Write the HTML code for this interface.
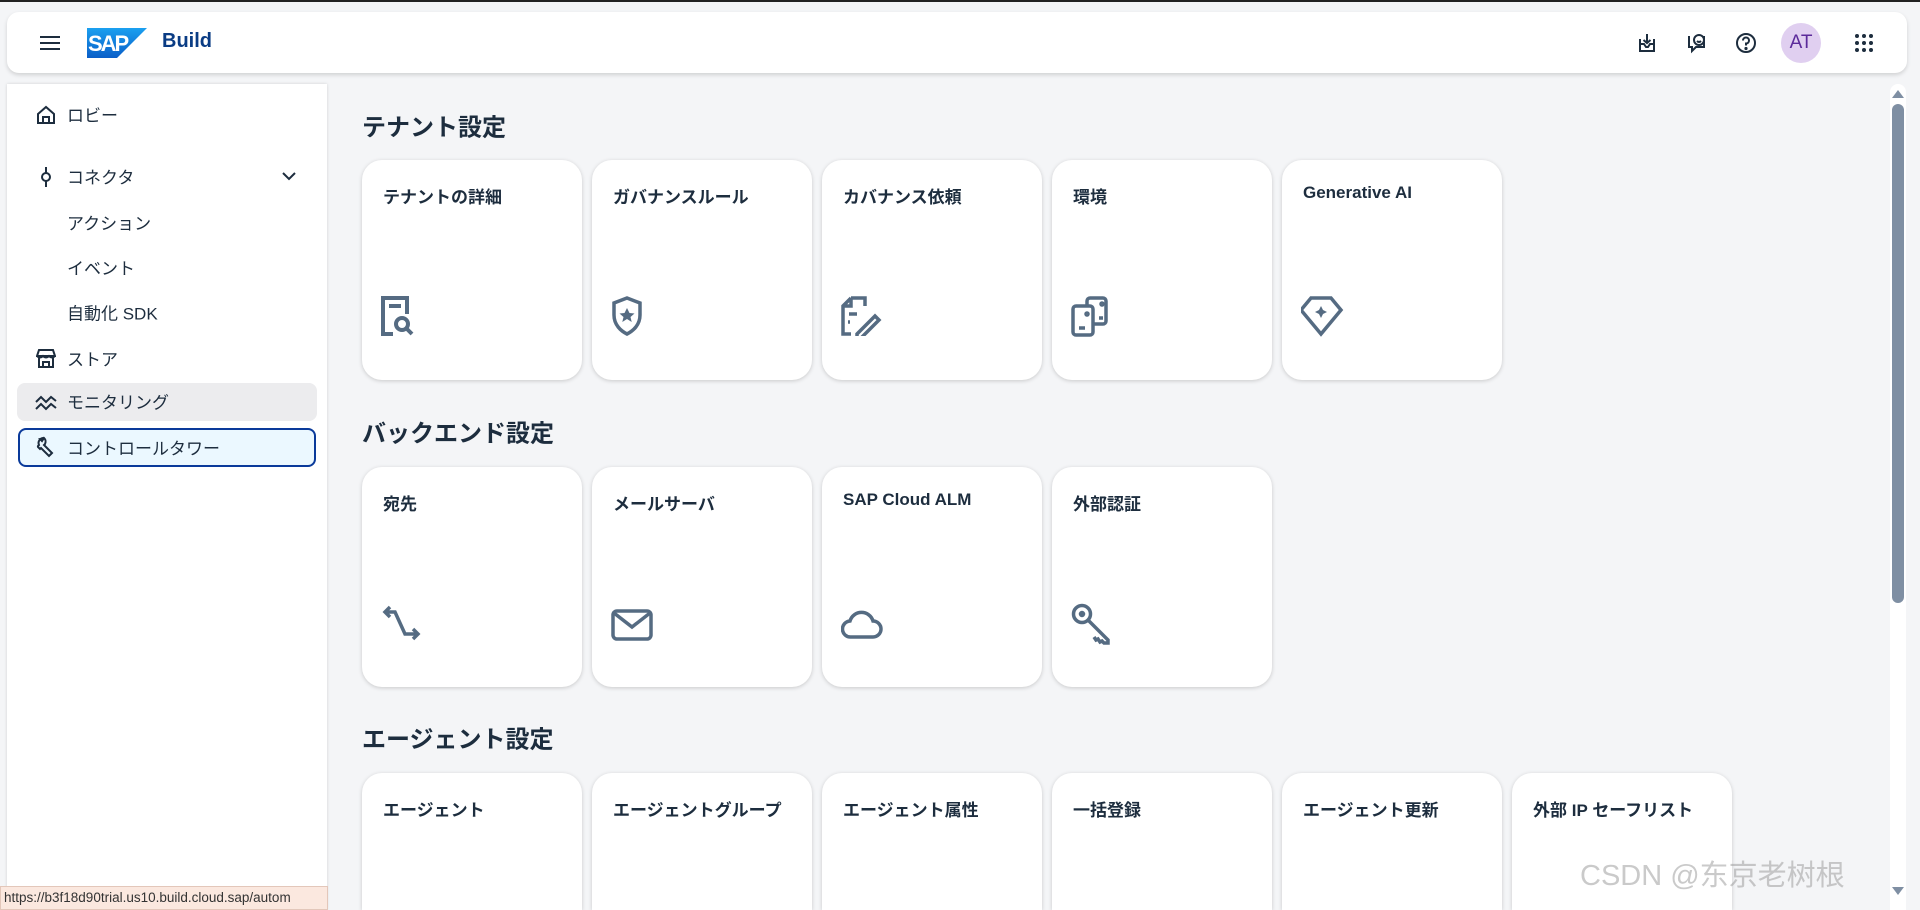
<!DOCTYPE html>
<html style="width:1920px;height:910px;overflow:hidden"><head><meta charset="utf-8"><style>
*{margin:0;padding:0;box-sizing:border-box}
html,body{width:1920px;height:910px;overflow:hidden}
body{background:#f4f5f7;font-family:"Liberation Sans","Noto Sans CJK JP",sans-serif;color:#1d2d3e;position:relative}
.topline{position:absolute;left:0;top:0;width:1920px;height:2px;background:#222}
.header{position:absolute;left:7px;top:12px;width:1900px;height:61px;background:#fff;border-radius:12px;box-shadow:0 2px 4px rgba(0,0,0,.15)}
.side{position:absolute;left:7px;top:84px;width:320px;height:826px;background:#fff;box-shadow:0 0 3px rgba(0,0,0,.15)}
.item{position:absolute;left:67px;font-size:17px;color:#1d2d3e;transform:translateY(-50%)}
.ic{position:absolute;transform:translate(-50%,-50%)}
.sec{position:absolute;left:362px;font-size:24px;font-weight:bold;transform:translateY(-50%)}
.card{position:absolute;width:220px;height:220px;background:#fff;border-radius:20px;box-shadow:0 1px 4px rgba(0,0,0,.18)}
.card.r3{height:137px;border-radius:20px 20px 0 0}
.card .t{position:absolute;left:21px;top:23px;font-size:17px;font-weight:bold;white-space:nowrap}
.card svg{position:absolute;left:19px;top:136px}
</style></head><body>
<div class="topline"></div>
<div class="header">
  <svg style="position:absolute;left:33px;top:23px" width="20" height="16"><g stroke="#1d2d3e" stroke-width="2"><line x1="0" y1="2" x2="20" y2="2"/><line x1="0" y1="8" x2="20" y2="8"/><line x1="0" y1="14" x2="20" y2="14"/></g></svg>
  <svg style="position:absolute;left:80px;top:16px" width="60" height="30"><defs><linearGradient id="g" x1="0" x2="0" y1="0" y2="1"><stop offset="0" stop-color="#1ba0f0"/><stop offset="1" stop-color="#0a5ec8"/></linearGradient></defs><polygon points="0,0 60,0 30,30 0,30" fill="url(#g)"/><text x="1" y="23" font-family="Liberation Sans" font-weight="bold" font-size="22" fill="#fff" letter-spacing="-2">SAP</text></svg>
  <div style="position:absolute;left:155px;top:18px;font-size:20px;color:#0a3c84;font-weight:bold">Build</div>
  <svg class="ic" style="left:1640px;top:31px" width="20" height="20" fill="none" stroke="#1d2d3e" stroke-width="2"><path d="M3 6v12h14V6M3 11h4l2 3h2l2-3h4M10 1v9M6.5 7l3.5 3 3.5-3"/></svg>
  <svg class="ic" style="left:1689px;top:31px" width="22" height="22" fill="none" stroke="#1d2d3e" stroke-width="2"><path d="M4 4v11h3v4l4-4h8V4"/><circle cx="14" cy="8" r="5"/><path d="M12 9q2 2 4 0"/></svg>
  <svg class="ic" style="left:1739px;top:31px" width="22" height="22" fill="none" stroke="#1d2d3e" stroke-width="2"><circle cx="11" cy="11" r="9"/><path d="M8 8.5a3 3 0 1 1 3 3v2"/><circle cx="11" cy="16.5" r=".6" fill="#1d2d3e"/></svg>
  <div style="position:absolute;left:1774px;top:11px;width:40px;height:40px;border-radius:50%;background:#e0cff0;color:#5b2a9a;font-size:19px;text-align:center;line-height:40px">AT</div>
  <svg class="ic" style="left:1857px;top:31px" width="20" height="20" fill="#1d2d3e"><circle cx="3" cy="3" r="2"/><circle cx="10" cy="3" r="2"/><circle cx="17" cy="3" r="2"/><circle cx="3" cy="10" r="2"/><circle cx="10" cy="10" r="2"/><circle cx="17" cy="10" r="2"/><circle cx="3" cy="17" r="2"/><circle cx="10" cy="17" r="2"/><circle cx="17" cy="17" r="2"/></svg>
</div>
<div class="side"></div>
<div style="position:absolute;left:17px;top:383px;width:300px;height:38px;background:#ececee;border-radius:8px"></div>
<div style="position:absolute;left:18px;top:428px;width:298px;height:39px;background:#ebf8ff;border:2px solid #0a3a9a;border-radius:8px"></div>
<svg class="ic" style="left:46px;top:115px" width="20" height="20" fill="none" stroke="#1d2d3e" stroke-width="2"><path d="M2 9l8-7 8 7v9H2zM7 18v-6h6v6"/></svg>
<div class="item" style="top:114px">ロビー</div>
<svg class="ic" style="left:46px;top:177px" width="12" height="20" fill="none" stroke="#1d2d3e" stroke-width="2"><circle cx="6" cy="10" r="4"/><path d="M6 0v6M6 14v6"/></svg>
<div class="item" style="top:176px">コネクタ</div>
<svg class="ic" style="left:289px;top:177px" width="14" height="10" fill="none" stroke="#1d2d3e" stroke-width="2"><path d="M1 1l6 6 6-6"/></svg>
<div class="item" style="top:222px">アクション</div>
<div class="item" style="top:267px">イベント</div>
<div class="item" style="top:312px">自動化 SDK</div>
<svg class="ic" style="left:46px;top:358px" width="20" height="20" fill="none" stroke="#1d2d3e" stroke-width="2"><path d="M3 2h14l2 6H1zM1 8q3 3 6 0q3 3 6 0q3 3 6 0M3 10v9h14v-9M7 19v-5h6v5"/></svg>
<div class="item" style="top:358px">ストア</div>
<svg class="ic" style="left:46px;top:402px" width="22" height="18" fill="none" stroke="#1d2d3e" stroke-width="2"><path d="M1 9l5-5 5 5 5-5 5 4M1 16l5-5 5 5 5-5 5 4"/></svg>
<div class="item" style="top:401px">モニタリング</div>
<svg class="ic" style="left:46px;top:447px" width="22" height="22" fill="none" stroke="#1d2d3e" stroke-width="2"><path d="M9 2a5 5 0 0 0-5 7l-1 1a1 1 0 0 0 0 1l2 2 1-1 8 8 2-2 1-1-8-8 1-1a5 5 0 0 0-1-6l-2 3-2-2z"/></svg>
<div class="item" style="top:447px">コントロールタワー</div>

<div class="sec" style="top:125px">テナント設定</div>
<div class="sec" style="top:431px">バックエンド設定</div>
<div class="sec" style="top:737px">エージェント設定</div>

<div class="card" style="left:362px;top:160px"><div class="t">テナントの詳細</div>
<svg width="36" height="40" fill="none" stroke="#556b82" stroke-width="4"><path d="M12 38H2V2h24v16M8 10h12"/><circle cx="21" cy="28" r="6"/><path d="M25 32l6 6"/></svg></div>
<div class="card" style="left:592px;top:160px"><div class="t">ガバナンスルール</div>
<svg width="36" height="40" fill="none" stroke="#556b82" stroke-width="3.5"><path d="M16 2l13 5v12c0 10-7 16-13 19C10 35 3 29 3 19V7z"/><path d="M16 12l2.5 5 5 .5-4 3.5 1.2 5L16 23l-4.7 3 1.2-5-4-3.5 5-.5z" fill="#556b82" stroke="none"/></svg></div>
<div class="card" style="left:822px;top:160px"><div class="t">カバナンス依頼</div>
<svg width="44" height="40" fill="none" stroke="#556b82" stroke-width="3.5"><path d="M10 2h14v8M10 2L2 10v28h8M2 10h8V2M8 18h8M7 26h2M16 38l18-18 4 4-18 18h-4z"/></svg></div>
<div class="card" style="left:1052px;top:160px"><div class="t">環境</div>
<svg width="44" height="42" fill="none" stroke="#556b82" stroke-width="3.5"><rect x="2" y="10" width="20" height="29" rx="3"/><path d="M16 10V5a3 3 0 0 1 3-3h13a3 3 0 0 1 3 3v20a3 3 0 0 1-3 3h-10M8 32h6M28 22h4"/><circle cx="16" cy="18" r="1" fill="#556b82"/><circle cx="31" cy="8" r="1" fill="#556b82"/></svg></div>
<div class="card" style="left:1282px;top:160px"><div class="t">Generative AI</div>
<svg width="44" height="42" fill="none" stroke="#556b82" stroke-width="3.5"><path d="M10 2h20l10 12-20 24L0 14z"/><path d="M20 10l2 4 4 2-4 2-2 4-2-4-4-2 4-2z" fill="#556b82" stroke="none"/></svg></div>

<div class="card" style="left:362px;top:467px"><div class="t">宛先</div>
<svg width="44" height="42" fill="none" stroke="#556b82" stroke-width="3.5"><path d="M9 4L4 9l5 5M4 9h10l10 22h13M32 26l5 5-5 5"/></svg></div>
<div class="card" style="left:592px;top:467px"><div class="t">メールサーバ</div>
<svg width="44" height="42" fill="none" stroke="#556b82" stroke-width="3.5"><rect x="2" y="8" width="38" height="28" rx="4"/><path d="M3 10l18 14 18-14"/></svg></div>
<div class="card" style="left:822px;top:467px"><div class="t">SAP Cloud ALM</div>
<svg width="44" height="42" fill="none" stroke="#556b82" stroke-width="3.5"><path d="M10 34a8 8 0 0 1-1-16 12 12 0 0 1 23 0 8 8 0 0 1 0 16z"/></svg></div>
<div class="card" style="left:1052px;top:467px"><div class="t">外部認証</div>
<svg width="44" height="42" fill="none" stroke="#556b82" stroke-width="3.5"><circle cx="11" cy="11" r="8.5"/><circle cx="11" cy="11" r="1.5" fill="#556b82"/><path d="M17 17l20 20v3h-4l-2-2-2 1-2-3-2 1-2-3"/></svg></div>

<div class="card r3" style="left:362px;top:773px"><div class="t">エージェント</div></div>
<div class="card r3" style="left:592px;top:773px"><div class="t">エージェントグループ</div></div>
<div class="card r3" style="left:822px;top:773px"><div class="t">エージェント属性</div></div>
<div class="card r3" style="left:1052px;top:773px"><div class="t">一括登録</div></div>
<div class="card r3" style="left:1282px;top:773px"><div class="t">エージェント更新</div></div>
<div class="card r3" style="left:1512px;top:773px"><div class="t">外部 IP セーフリスト</div></div>

<div style="position:absolute;left:1890px;top:84px;width:16px;height:826px;background:#fff;border-radius:8px 8px 0 0"></div>
<svg style="position:absolute;left:1891px;top:89px" width="14" height="10"><polygon points="7,1 13,9 1,9" fill="#7f8fa3"/></svg>
<div style="position:absolute;left:1892px;top:104px;width:12px;height:499px;background:#7f8fa3;border-radius:6px"></div>
<svg style="position:absolute;left:1891px;top:886px" width="14" height="10"><polygon points="1,1 13,1 7,9" fill="#7f8fa3"/></svg>

<div style="position:absolute;left:1580px;top:858px;font-size:29px;line-height:36px;color:rgba(150,150,150,.5);white-space:nowrap">CSDN @东京老树根</div>
<div style="position:absolute;left:0;top:886px;width:328px;height:24px;background:#fbe8df;border:1px solid #e3c7ba;font-size:13.5px;color:#333;line-height:22px;padding-left:3px;white-space:nowrap;overflow:hidden">https://b3f18d90trial.us10.build.cloud.sap/autom</div>
</body></html>
